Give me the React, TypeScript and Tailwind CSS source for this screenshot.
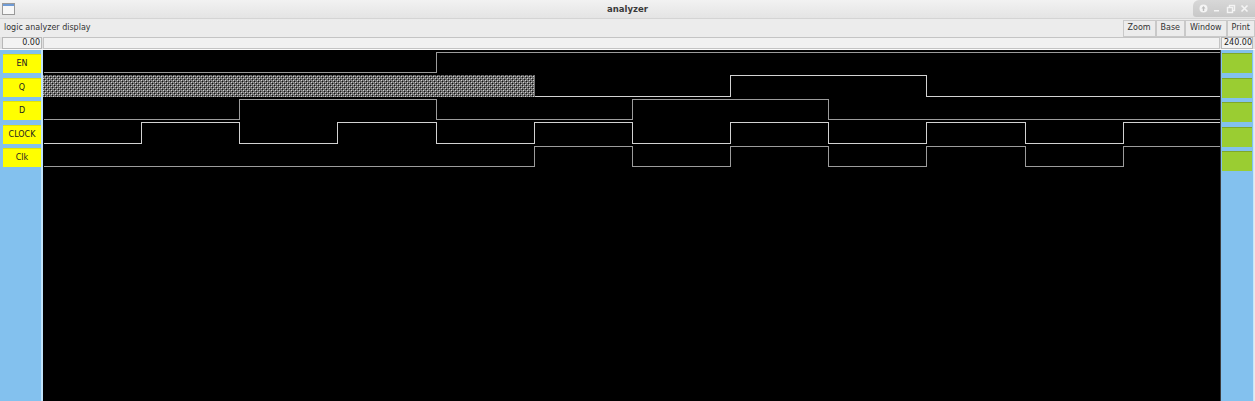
import React from "react";

type Level = 0 | 1 | "x";
type Seg = [number, number, Level];

const PX = 4.9075; // pixels per time unit
const CANVAS_W = 1178;
const CANVAS_H = 351;

function clock(start: Level, from: number): Seg[] {
  const segs: Seg[] = [];
  let lvl = start;
  for (let t = from; t < 240; t += 20) {
    segs.push([t, t + 20, lvl]);
    lvl = lvl === 1 ? 0 : 1;
  }
  return segs;
}

const signals: { name: string; color: string; segs: Seg[] }[] = [
  { name: "EN", color: "#9c9c9c", segs: [[0, 80, 0], [80, 240, 1]] },
  { name: "Q", color: "#d2d2d2", segs: [[0, 100, "x"], [100, 140, 0], [140, 180, 1], [180, 240, 0]] },
  { name: "D", color: "#9c9c9c", segs: [[0, 40, 0], [40, 80, 1], [80, 120, 0], [120, 160, 1], [160, 240, 0]] },
  { name: "CLOCK", color: "#d2d2d2", segs: clock(0, 0) },
  { name: "Clk", color: "#9c9c9c", segs: [[0, 100, 0], ...clock(1, 100)] },
];

const tx = (t: number) => Math.round(t * PX) + 0.5;
const crisp = (v: number) => Math.floor(v) + 0.5;

function Wave({ segs, row, color }: { segs: Seg[]; row: number; color: string }) {
  const hi = crisp(2 + 23.5 * row);
  const lo = crisp(22.5 + 23.5 * row);
  const paths: string[] = [];
  const hatches: React.ReactNode[] = [];
  let d = "";
  let prev: Level | null = null;
  segs.forEach(([a, b, lvl], i) => {
    const x0 = tx(a);
    const x1 = Math.min(tx(b), CANVAS_W - 1.5);
    if (lvl === "x") {
      if (d) paths.push(d);
      d = "";
      hatches.push(
        <g key={i}>
          <rect x={x0 - 0.5} y={hi - 0.5} width={x1 - x0} height={lo - hi + 1} fill="url(#hatch)" />
          <line x1={x1} y1={hi} x2={x1} y2={lo} stroke="#e8e8e8" strokeDasharray="1 1" />
        </g>
      );
    } else {
      const y = lvl === 1 ? hi : lo;
      if (!d) d = `M${x0} ${y}`;
      else if (prev !== lvl) d += ` L${x0} ${y}`;
      d += ` L${x1} ${y}`;
    }
    prev = lvl;
  });
  if (d) paths.push(d);
  return (
    <g>
      {hatches}
      {paths.map((p, i) => (
        <path key={i} d={p} fill="none" stroke={color} strokeWidth={1} shapeRendering="crispEdges" />
      ))}
    </g>
  );
}

function MenuButton({ label }: { label: string }) {
  return (
    <button className="flex h-[17px] items-center border border-[#c9c9c9] bg-[#ececec] px-[4px] text-[8px] text-[#333]">
      {label}
    </button>
  );
}

export default function App() {
  return (
    <div className="flex h-[401px] w-[1255px] flex-col overflow-hidden bg-[#e9e9e9] font-['DejaVu_Sans',sans-serif]">
      {/* Title bar */}
      <div className="relative flex h-[19px] items-center justify-center border-b border-[#d4d4d4] bg-gradient-to-b from-[#f2f2f2] to-[#e4e4e4]">
        <div className="absolute left-[2px] top-[3px] h-[12px] w-[13px] border border-[#9a9a9a] bg-[#f7f7f7]">
          <div className="h-[2px] bg-[#6f9bd6]" />
        </div>
        <span className="text-[8.5px] font-bold text-[#3a3a3a]">analyzer</span>
        <div className="absolute right-0 top-0 flex h-[17px] w-[62px] items-center justify-around rounded-tl-[6px] rounded-bl-[3px] bg-gradient-to-b from-[#d8d8d8] to-[#c8c8c8] px-[4px]">
          <svg width="9" height="9" viewBox="0 0 9 9">
            <circle cx="4.5" cy="4.5" r="4" fill="#f4f4f4" />
            <path d="M4.5 2 L2.5 4.5 H3.8 V7 H5.2 V4.5 H6.5 Z" fill="#bdbdbd" />
          </svg>
          <svg width="9" height="9" viewBox="0 0 9 9">
            <rect x="2" y="6" width="5" height="1.5" fill="#f4f4f4" />
          </svg>
          <svg width="10" height="10" viewBox="0 0 10 10">
            <rect x="3.5" y="1.5" width="5" height="5" fill="none" stroke="#f4f4f4" strokeWidth="1.4" />
            <rect x="1.5" y="3.5" width="5" height="5" fill="#cfcfcf" stroke="#f4f4f4" strokeWidth="1.4" />
          </svg>
          <svg width="9" height="9" viewBox="0 0 9 9">
            <path d="M1.5 1.5 L7.5 7.5 M7.5 1.5 L1.5 7.5" stroke="#f4f4f4" strokeWidth="1.6" />
          </svg>
        </div>
      </div>

      {/* Menu bar */}
      <div className="flex h-[18px] items-center justify-between bg-[#ececec] pl-[4px]">
        <span className="text-[8px] text-[#333]">logic analyzer display</span>
        <div className="flex">
          <MenuButton label="Zoom" />
          <MenuButton label="Base" />
          <MenuButton label="Window" />
          <MenuButton label="Print" />
        </div>
      </div>

      {/* Time row */}
      <div className="flex h-[13px] items-stretch gap-[1px] border-b border-[#fafafa] bg-[#e2e2e2] px-[2px]">
        <div className="flex w-[40px] items-center justify-end border border-[#b8b8b8] bg-[#f3f3f3] pr-[1px] text-[8px] text-[#222]">
          0.00
        </div>
        <div className="flex-1 border border-[#c4c4c4] bg-[#f1f1f1]" />
        <div className="flex w-[32px] items-center justify-end border border-[#b8b8b8] bg-[#f3f3f3] text-[8px] text-[#222]">
          240.00
        </div>
      </div>

      {/* Body */}
      <div className="flex flex-1">
        <div className="flex w-[43px] flex-col gap-[4.5px] border-r-2 border-[#bfe3fb] bg-[#83c1ee] pl-[3px] pt-[4px]">
          {signals.map((s) => (
            <div
              key={s.name}
              className="flex h-[19px] w-[38px] items-center justify-center border-t border-[#e6e600] bg-[#ffff00] text-[8px] text-[#222]"
            >
              {s.name}
            </div>
          ))}
        </div>
        <div className="w-[1178px] border-r border-[#3c3c3c] bg-black">
          <svg width={CANVAS_W} height={CANVAS_H} className="block">
            <defs>
              <pattern id="hatch" width="4" height="4" patternUnits="userSpaceOnUse">
                <rect width="4" height="4" fill="#666666" />
                <rect x="0" y="0" width="1" height="1" fill="#d0d0d0" />
                <rect x="2" y="2" width="1" height="1" fill="#d0d0d0" />
                <rect x="2" y="0" width="1" height="1" fill="#9a9a9a" />
                <rect x="0" y="2" width="1" height="1" fill="#9a9a9a" />
                <rect x="1" y="1" width="1" height="1" fill="#111111" />
                <rect x="3" y="3" width="1" height="1" fill="#111111" />
              </pattern>
            </defs>
            {signals.map((s, i) => (
              <Wave key={s.name} segs={s.segs} row={i} color={s.color} />
            ))}
          </svg>
        </div>
        <div className="flex w-[33px] flex-col gap-[4.5px] border-r border-[#c6e6fb] bg-[#83c1ee] pl-[1px] pt-[3px]">
          {signals.map((s) => (
            <div key={s.name} className="h-[20px] w-[30px] border-t border-[#7fa82a] bg-[#9acd32]" />
          ))}
        </div>
      </div>
    </div>
  );
}
